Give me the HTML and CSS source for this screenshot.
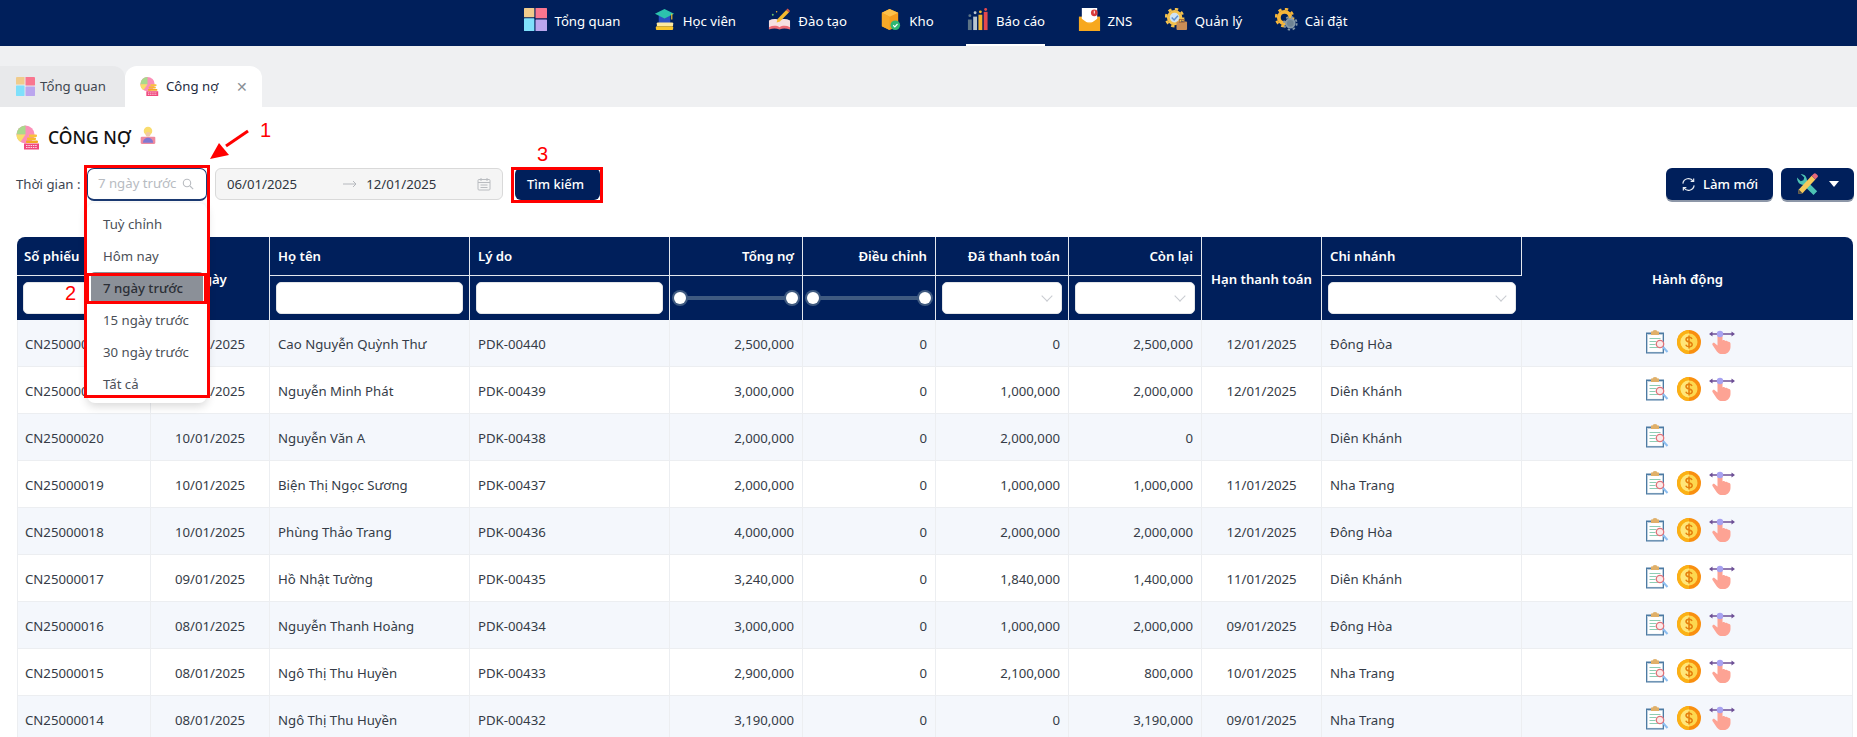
FILE: index.html
```html
<!DOCTYPE html>
<html lang="vi">
<head>
<meta charset="utf-8">
<title>Công nợ</title>
<link rel="stylesheet" href="styles.css">
</head>
<body>
<svg class="defs" aria-hidden="true">
  <symbol id="i-overview" viewBox="0 0 20 20">
    <rect width="9" height="8" rx=".5" fill="#f0cb8c"/><rect x="10" width="10" height="9" rx=".5" fill="#f9768f"/>
    <rect y="9" width="9" height="11" rx=".5" fill="#7fe0fb"/><rect x="10" y="10" width="10" height="10" rx=".5" fill="#bba6ee"/>
  </symbol>
  <symbol id="i-student" viewBox="0 0 24 24">
    <rect x="6" y="8" width="12" height="8" fill="#2a4fc0"/><rect x="4" y="15" width="17" height="4" rx="1" fill="#fde9a0"/>
    <rect x="3" y="19" width="18" height="4" rx="1" fill="#f7c52c"/>
    <polygon points="12,1 22,6 12,11 2,6" fill="#2cc2ad"/><rect x="19" y="6" width="1.2" height="6" fill="#f7c52c"/>
  </symbol>
  <symbol id="i-train" viewBox="0 0 24 24">
    <path d="M1 13c4-2 8-2 11 0 3-2 7-2 11 0v9c-4-2-8-2-11 0-3-2-7-2-11 0z" fill="#f6dfe0"/>
    <path d="M1 20c4-2 8-2 11 0 3-2 7-2 11 0v2.500c-4-1.500-8-1.500-11 0-3-1.500-7-1.500-11 0z" fill="#ec6a74"/>
    <path d="M9 15l1-3.500L19 2l3 2.500-9.500 9.500z" fill="#f5b92e"/><path d="M19 2l3 2.500 1-1.500-2.500-2.500z" fill="#e2574c"/>
    <circle cx="5" cy="7" r="1" fill="#6cc46a"/><circle cx="9" cy="4" r=".8" fill="#f5b92e"/>
  </symbol>
  <symbol id="i-box" viewBox="0 0 24 24">
    <polygon points="11,1 20,5 20,19 11,23 3,19 3,5" fill="#f59b1c"/><polygon points="3,5 11,1 20,5 11,9" fill="#fdc04a"/>
    <polygon points="3,5 11,9 11,23 3,19" fill="#f7a928"/>
    <circle cx="17" cy="18" r="5" fill="#2fb673"/><path d="M14.800 18l1.700 1.700 2.800-3" fill="none" stroke="#fff" stroke-width="1.200"/>
  </symbol>
  <symbol id="i-chart" viewBox="0 0 24 24">
    <rect x="2" y="12" width="4" height="11" fill="#5d7486"/><rect x="7.500" y="9" width="4" height="14" fill="#b9c6cf"/>
    <rect x="13" y="7" width="4" height="16" fill="#f3b52e"/><rect x="18.500" y="4" width="4" height="19" fill="#e5484d"/>
    <circle cx="4" cy="8" r="1.500" fill="#5d7486"/><circle cx="9.500" cy="5" r="1.500" fill="#b9c6cf"/><circle cx="15" cy="4" r="1.500" fill="#f3b52e"/><circle cx="20.500" cy="1.500" r="1.500" fill="#e5484d"/>
  </symbol>
  <symbol id="i-zns" viewBox="0 0 24 24">
    <rect x="1" y="9" width="22" height="15" fill="#f9b233"/><rect x="4" y="0" width="16" height="15" fill="#fff"/>
    <path d="M1 9l11 8 11-8v15H1z" fill="#f7a81e"/><circle cx="17" cy="5" r="3.500" fill="#d93a3a"/><rect x="16.500" y="2.800" width="1" height="3" fill="#fff"/>
  </symbol>
  <symbol id="i-manage" viewBox="0 0 24 24">
    <circle cx="10" cy="10" r="6.500" fill="#cfe3f5" stroke="#f3c14d" stroke-width="3"/>
    <circle cx="10" cy="10" r="9" fill="none" stroke="#f3c14d" stroke-width="2.500" stroke-dasharray="3.500 3.570"/>
    <path d="M7 10l2.500 2.500 4-4.500" fill="none" stroke="#5b8fd0" stroke-width="1.500"/>
    <rect x="12" y="14" width="11" height="9" rx="1" fill="#c98d56"/><rect x="15" y="12" width="5" height="3" fill="none" stroke="#a56f3f"/>
  </symbol>
  <symbol id="i-settings" viewBox="0 0 24 24">
    <circle cx="10" cy="10" r="6" fill="#00205b" stroke="#f6b63a" stroke-width="4"/>
    <circle cx="10" cy="10" r="9" fill="none" stroke="#f6b63a" stroke-width="2.500" stroke-dasharray="3.500 3.570"/>
    <circle cx="16" cy="16" r="4.500" fill="#6f8494" stroke="#8599a8" stroke-width="2"/>
    <circle cx="16" cy="16" r="6.700" fill="none" stroke="#8599a8" stroke-width="1.800" stroke-dasharray="2.500 2.760"/>
  </symbol>
  <symbol id="i-debt" viewBox="0 0 24 24">
    <circle cx="9.500" cy="9" r="9" fill="#fb8fb8"/><path d="M9.500 9V0A9 9 0 0 0 .500 9z" fill="#a9d98c"/>
    <path d="M9.500 9H.500a9 9 0 0 0 4 7.500z" fill="#f6df6a"/>
    <rect x="11" y="12" width="9" height="2.500" rx="1" fill="#f8b92f"/><rect x="13" y="9" width="8" height="2.500" rx="1" fill="#f9c23c"/><rect x="10" y="15" width="12" height="2.500" rx="1" fill="#f4a825"/>
    <rect x="8" y="18" width="15" height="6" fill="#f0487d"/>
    <path d="M10 20h11M10 22h11" stroke="#fff" stroke-width=".8" stroke-dasharray="1.500 .8"/>
  </symbol>
  <symbol id="i-lamp" viewBox="0 0 16 16">
    <circle cx="8" cy="4" r="3.800" fill="#f9dc6e"/><rect x="1.500" y="9" width="13" height="6.500" rx="1" fill="#ee8aa0"/>
    <circle cx="8" cy="7" r="2.200" fill="#f1c9a4"/><path d="M3.500 14.500c0-3 2.300-4.500 4.500-4.500s4.500 1.500 4.500 4.500z" fill="#7f78d2"/>
  </symbol>
  <symbol id="i-clip" viewBox="0 0 24 24">
    <rect x="1" y="2.500" width="18" height="21" fill="#4d7ba3"/><rect x="2.500" y="4.500" width="15" height="17.500" fill="#fff" stroke="#d9e4ec" stroke-width=".5"/>
    <path d="M6 1.500h1.500a2.500 1.500 0 0 1 5 0H14v3.500H6z" fill="#e0b069"/>
    <path d="M4.500 8.500h11M4.500 11.500h7M4.500 14.500h6M4.500 17.500h9" stroke="#8ecdb4" stroke-width="1"/>
    <circle cx="15" cy="14" r="3.700" fill="#fbeaea" stroke="#e2727a" stroke-width="1.300"/><path d="M18 17l4.500 5" stroke="#8bbdf0" stroke-width="2"/>
  </symbol>
  <symbol id="i-coin" viewBox="0 0 24 24">
    <circle cx="12" cy="12" r="12" fill="#f98f0f"/><path d="M12 0a12 12 0 0 0 0 24z" fill="#fbb115"/>
    <circle cx="12" cy="12" r="8.500" fill="#fdd84f"/><path d="M12 3.500a8.500 8.500 0 0 0 0 17z" fill="#ffe679"/>
    <path d="M15 9c-.5-1.300-1.700-1.800-3-1.800-1.700 0-3 .8-3 2.300 0 3.300 6.200 1.800 6.200 5 0 1.500-1.400 2.300-3.200 2.300-1.400 0-2.700-.6-3.200-2M12 5.500v13" fill="none" stroke="#e57f0c" stroke-width="1.500"/>
  </symbol>
  <symbol id="i-hand" viewBox="0 0 26 24">
    <path d="M8.500 5a2.500 2.500 0 0 1 5 0v5.500c1-.8 2.300-.5 2.800.5 1-.6 2.200-.2 2.600.8 1.200-.4 2.600.3 2.600 2v3c0 4-3 7.500-7.500 7.500-3.500 0-5.500-1.500-7-4L3.500 15c-.8-1.300.8-2.800 2-2l3 2.500z" fill="#fda394"/>
    <path d="M2 4h22" stroke="#6d4f96" stroke-width="1.500"/><path d="M0 4l3.500-2.500v5zM26 4l-3.500-2.500v5z" fill="#6d4f96"/>
    <circle cx="11" cy="4" r="3.200" fill="#a7a1f0"/>
  </symbol>
  <symbol id="i-tools" viewBox="0 0 24 24">
    <path d="M4 1l4 4-1 3-3 1-4-4c0 5 3 8 7 8l11 11 4-4L11 9C11 5 9 1 4 1z" fill="#4dc3b4"/>
    <path d="M2 18L16 3l4 4L6 22l-5 1z" fill="#f6ca5b"/><path d="M16 3l2-2a2 2 0 0 1 3 0l1 1a2 2 0 0 1 0 3l-2 2z" fill="#e8697a"/><path d="M1 23l1-5 4 4z" fill="#4a4a4a"/>
  </symbol>
</svg>

<header class="topnav">
  <nav class="topnav-list">
    <a class="nav-item"><svg class="nav-icon"><use href="#i-overview"/></svg>Tổng quan</a>
    <a class="nav-item"><svg class="nav-icon"><use href="#i-student"/></svg>Học viên</a>
    <a class="nav-item"><svg class="nav-icon"><use href="#i-train"/></svg>Đào tạo</a>
    <a class="nav-item"><svg class="nav-icon"><use href="#i-box"/></svg>Kho</a>
    <a class="nav-item is-active"><svg class="nav-icon"><use href="#i-chart"/></svg>Báo cáo</a>
    <a class="nav-item"><svg class="nav-icon"><use href="#i-zns"/></svg>ZNS</a>
    <a class="nav-item"><svg class="nav-icon"><use href="#i-manage"/></svg>Quản lý</a>
    <a class="nav-item"><svg class="nav-icon"><use href="#i-settings"/></svg>Cài đặt</a>
  </nav>
</header>

<div class="tabbar">
  <div class="tab"><svg class="tab-icon"><use href="#i-overview"/></svg>Tổng quan</div>
  <div class="tab is-active"><svg class="tab-icon"><use href="#i-debt"/></svg>Công nợ<span class="tab-close">✕</span></div>
</div>

<main class="content">
  <h1 class="page-title"><svg class="title-icon"><use href="#i-debt"/></svg>CÔNG NỢ<svg class="lamp-icon"><use href="#i-lamp"/></svg></h1>

  <div class="filters">
    <span class="filter-label">Thời gian :</span>
    <div class="select-wrap">
      <div class="select-box"><span>7 ngày trước</span>
        <svg class="search-icon" viewBox="0 0 12 12"><circle cx="5" cy="5" r="3.700"/><path d="M8 8l3.200 3.200"/></svg>
      </div>
      <ul class="dropdown">
        <li>Tuỳ chỉnh</li><li>Hôm nay</li><li class="is-selected">7 ngày trước</li>
        <li>15 ngày trước</li><li>30 ngày trước</li><li>Tất cả</li>
      </ul>
    </div>
    <div class="range-box">
      <span class="range-date">06/01/2025</span>
      <svg class="range-arrow" viewBox="0 0 14 8"><path d="M0 4h13M10 1l3 3-3 3"/></svg>
      <span class="range-date">12/01/2025</span>
      <svg class="cal-icon" viewBox="0 0 14 14"><rect x="1" y="2.500" width="12" height="10.500" rx="1"/><path d="M1 5.500h12M4 1v3M10 1v3M3.500 8h7M3.500 10.500h7"/></svg>
    </div>
    <button class="btn btn-search">Tìm kiếm</button>
    <div class="filter-actions">
      <button class="btn btn-refresh"><svg class="refresh-icon" viewBox="0 0 16 16"><path d="M2 7a6 6 0 0 1 11-2.500M14 9a6 6 0 0 1-11 2.500"/><path d="M13.500 1.500v3.200h-3.200M2.500 14.500v-3.200h3.200"/></svg>Làm mới</button>
      <button class="btn btn-tools"><svg class="tools-icon"><use href="#i-tools"/></svg><span class="caret"></span></button>
    </div>
  </div>

  <table class="grid">
    <colgroup>
      <col class="c-1"><col class="c-2"><col class="c-3"><col class="c-3"><col class="c-4"><col class="c-4"><col class="c-4"><col class="c-4"><col class="c-7"><col class="c-5"><col class="c-6">
    </colgroup>
    <thead>
      <tr class="head-1">
        <th class="left">Số phiếu</th><th rowspan="2" class="span">Ngày</th><th class="left">Họ tên</th><th class="left">Lý do</th>
        <th class="right">Tổng nợ</th><th class="right">Điều chỉnh</th><th class="right">Đã thanh toán</th><th class="right">Còn lại</th>
        <th rowspan="2" class="span">Hạn thanh toán</th><th class="left">Chi nhánh</th><th rowspan="2" class="span">Hành động</th>
      </tr>
      <tr class="head-2">
        <th><input class="filter-input"></th><th><input class="filter-input"></th><th><input class="filter-input"></th>
        <th><div class="slider"><i></i><i></i></div></th><th><div class="slider"><i></i><i></i></div></th>
        <th><div class="filter-select"><span class="chev"></span></div></th><th><div class="filter-select"><span class="chev"></span></div></th>
        <th><div class="filter-select"><span class="chev"></span></div></th>
      </tr>
    </thead>
    <tbody>
      <tr><td>CN25000022</td><td class="center">10/01/2025</td><td>Cao Nguyễn Quỳnh Thư</td><td>PDK-00440</td><td class="right">2,500,000</td><td class="right">0</td><td class="right">0</td><td class="right">2,500,000</td><td class="center">12/01/2025</td><td>Đông Hòa</td><td><div class="acts"><svg class="act"><use href="#i-clip"/></svg><svg class="act"><use href="#i-coin"/></svg><svg class="act act-hand"><use href="#i-hand"/></svg></div></td></tr>
      <tr><td>CN25000021</td><td class="center">10/01/2025</td><td>Nguyễn Minh Phát</td><td>PDK-00439</td><td class="right">3,000,000</td><td class="right">0</td><td class="right">1,000,000</td><td class="right">2,000,000</td><td class="center">12/01/2025</td><td>Diên Khánh</td><td><div class="acts"><svg class="act"><use href="#i-clip"/></svg><svg class="act"><use href="#i-coin"/></svg><svg class="act act-hand"><use href="#i-hand"/></svg></div></td></tr>
      <tr><td>CN25000020</td><td class="center">10/01/2025</td><td>Nguyễn Văn A</td><td>PDK-00438</td><td class="right">2,000,000</td><td class="right">0</td><td class="right">2,000,000</td><td class="right">0</td><td class="center"></td><td>Diên Khánh</td><td><div class="acts"><svg class="act"><use href="#i-clip"/></svg></div></td></tr>
      <tr><td>CN25000019</td><td class="center">10/01/2025</td><td>Biện Thị Ngọc Sương</td><td>PDK-00437</td><td class="right">2,000,000</td><td class="right">0</td><td class="right">1,000,000</td><td class="right">1,000,000</td><td class="center">11/01/2025</td><td>Nha Trang</td><td><div class="acts"><svg class="act"><use href="#i-clip"/></svg><svg class="act"><use href="#i-coin"/></svg><svg class="act act-hand"><use href="#i-hand"/></svg></div></td></tr>
      <tr><td>CN25000018</td><td class="center">10/01/2025</td><td>Phùng Thảo Trang</td><td>PDK-00436</td><td class="right">4,000,000</td><td class="right">0</td><td class="right">2,000,000</td><td class="right">2,000,000</td><td class="center">12/01/2025</td><td>Đông Hòa</td><td><div class="acts"><svg class="act"><use href="#i-clip"/></svg><svg class="act"><use href="#i-coin"/></svg><svg class="act act-hand"><use href="#i-hand"/></svg></div></td></tr>
      <tr><td>CN25000017</td><td class="center">09/01/2025</td><td>Hồ Nhật Tường</td><td>PDK-00435</td><td class="right">3,240,000</td><td class="right">0</td><td class="right">1,840,000</td><td class="right">1,400,000</td><td class="center">11/01/2025</td><td>Diên Khánh</td><td><div class="acts"><svg class="act"><use href="#i-clip"/></svg><svg class="act"><use href="#i-coin"/></svg><svg class="act act-hand"><use href="#i-hand"/></svg></div></td></tr>
      <tr><td>CN25000016</td><td class="center">08/01/2025</td><td>Nguyễn Thanh Hoàng</td><td>PDK-00434</td><td class="right">3,000,000</td><td class="right">0</td><td class="right">1,000,000</td><td class="right">2,000,000</td><td class="center">09/01/2025</td><td>Đông Hòa</td><td><div class="acts"><svg class="act"><use href="#i-clip"/></svg><svg class="act"><use href="#i-coin"/></svg><svg class="act act-hand"><use href="#i-hand"/></svg></div></td></tr>
      <tr><td>CN25000015</td><td class="center">08/01/2025</td><td>Ngô Thị Thu Huyền</td><td>PDK-00433</td><td class="right">2,900,000</td><td class="right">0</td><td class="right">2,100,000</td><td class="right">800,000</td><td class="center">10/01/2025</td><td>Nha Trang</td><td><div class="acts"><svg class="act"><use href="#i-clip"/></svg><svg class="act"><use href="#i-coin"/></svg><svg class="act act-hand"><use href="#i-hand"/></svg></div></td></tr>
      <tr><td>CN25000014</td><td class="center">08/01/2025</td><td>Ngô Thị Thu Huyền</td><td>PDK-00432</td><td class="right">3,190,000</td><td class="right">0</td><td class="right">0</td><td class="right">3,190,000</td><td class="center">09/01/2025</td><td>Nha Trang</td><td><div class="acts"><svg class="act"><use href="#i-clip"/></svg><svg class="act"><use href="#i-coin"/></svg><svg class="act act-hand"><use href="#i-hand"/></svg></div></td></tr>
    </tbody>
  </table>
</main>

<div class="note note-box-1"></div>
<div class="note note-box-2"></div>
<div class="note note-box-3"></div>
<span class="note note-num note-num-1">1</span>
<span class="note note-num note-num-2">2</span>
<span class="note note-num note-num-3">3</span>
<svg class="note note-arrow" viewBox="0 0 44 32"><path d="M40 2L18 17" stroke="#f00" stroke-width="3"/><polygon points="2,30 11,14 21,26" fill="#f00"/></svg>
</body>
</html>
```
FILE: styles.css
```css
* { box-sizing: border-box; }
html, body { margin: 0; height: 737px; overflow: hidden; }
body { position: relative; background: #fff; color: #333a45; font: 13.2px/1.4 "Noto Sans", "Open Sans", sans-serif; }
.defs { position: absolute; width: 0; height: 0; }

.topnav { height: 46px; background: #001f5b; }
.topnav-list { display: flex; justify-content: center; gap: 32.4px; height: 46px; padding-left: 15px; }
.nav-item { display: flex; align-items: center; gap: 7px; height: 46px; padding-bottom: 1px; color: #fff; font-size: 13.2px; border-bottom: 2px solid transparent; }
.nav-item.is-active { border-bottom-color: #fff; }
.nav-icon { width: 23px; height: 23px; margin-bottom: 4px; flex: none; }

.tabbar { display: flex; align-items: flex-end; height: 61px; background: #eff0f2; }
.tab { display: flex; align-items: center; height: 41px; width: 125px; padding-left: 16px; gap: 5px; background: #e8e9eb; border-radius: 0 12px 0 0; color: #3e4650; }
.tab.is-active { width: 137px; padding-left: 15px; gap: 7px; background: #fff; border-radius: 12px 12px 0 0; color: #1c2a3f; }
.tab-icon { width: 19px; height: 19px; flex: none; }
.tab-close { margin-left: 11px; color: #8a8f96; font-size: 14px; }

.content { padding: 16px 0 0 16px; }
.page-title { display: flex; align-items: center; gap: 8px; height: 27px; margin: 0; padding-top: 1px; font-size: 17.5px; font-weight: 500; color: #111; }
.title-icon { width: 24px; height: 27px; flex: none; }
.lamp-icon { width: 18px; height: 19px; flex: none; margin-top: -3px; }

.filters { display: flex; align-items: center; height: 32px; margin: 18px 3px 37px 0; }
.filter-label { width: 71px; color: #3c4450; }
.select-wrap { position: relative; width: 120px; height: 33px; }
.select-box { display: flex; align-items: center; justify-content: space-between; height: 33px; padding: 0 12px 0 10px; background: #fff; border: 1px solid #1b3a73; border-bottom-width: 2px; border-radius: 7px; color: #b7bbc1; }
.search-icon { width: 12px; height: 12px; fill: none; stroke: #b9bcc1; stroke-width: 1.100; flex: none; }
.dropdown { position: absolute; top: 35px; left: 0; z-index: 3; width: 120px; height: 200px; margin: 0; padding: 5px 4px; list-style: none; background: #fff; border-radius: 8px; box-shadow: 0 3px 10px rgba(0,0,0,.16); }
.dropdown li { height: 32px; padding: 0 12px; line-height: 32px; color: #4b4f57; white-space: nowrap; }
.dropdown .is-selected { background: #8b9098; border-radius: 4px; color: #2b2f36; font-weight: 500; }

.range-box { display: flex; align-items: center; width: 288px; height: 32px; margin-left: 8px; padding: 0 11px; background: #f5f5f5; border: 1px solid #d9d9d9; border-radius: 6px; color: #2f3640; }
.range-arrow { width: 14px; height: 8px; margin: 0 9px 0 46px; fill: none; stroke: #b5b8bd; flex: none; }
.cal-icon { width: 14px; height: 14px; margin-left: auto; fill: none; stroke: #b9bcc0; flex: none; }

.btn { display: flex; align-items: center; justify-content: center; height: 32px; padding: 0; border: 0; border-radius: 6px; background: #001f5b; color: #fff; font: inherit; box-shadow: 0 2px 0 #8d97a8; }
.btn-search { width: 85px; margin-left: 12px; padding-right: 4px; font-weight: 500; font-size: 13px; box-shadow: none; }
.filter-actions { display: flex; gap: 8px; margin-left: auto; }
.btn-refresh { width: 107px; gap: 7px; font-weight: 500; }
.refresh-icon { width: 15px; height: 15px; fill: none; stroke: #e8ecf2; stroke-width: 1.300; flex: none; }
.btn-tools { width: 73px; gap: 10px; }
.tools-icon { width: 22px; height: 22px; flex: none; }
.caret { width: 0; height: 0; border: 5.500px solid transparent; border-top: 6px solid #fff; border-bottom: 0; }

.grid { width: 1836px; margin-left: 1px; table-layout: fixed; border-collapse: separate; border-spacing: 0; }
.c-1 { width: 134px; } .c-2 { width: 119px; } .c-3 { width: 200px; } .c-4 { width: 133px; } .c-7 { width: 120px; } .c-5 { width: 200px; } .c-6 { width: 331px; }
.grid th { padding: 0 8px; background: #001f5b; color: #fff; font-weight: 600; text-align: center; border-right: 1px solid #e4e8ee; }
.grid th:last-child { border-right: 0; }
.grid th.span { padding-top: 2px; }
.head-1 th:first-child { border-top-left-radius: 8px; padding-left: 7px; }
.head-1 th:last-child { border-top-right-radius: 8px; }
.head-1 { height: 39px; }
.head-1 th.left, .head-1 th.right { border-bottom: 1px solid #e4e8ee; }
.head-1 th.left { text-align: left; }
.head-1 th.right { text-align: right; }
.head-2 { height: 44px; }
.head-2 th { padding: 0 6px; }
.filter-input, .filter-select { display: block; width: 100%; height: 32px; margin: 0; padding: 0 8px; background: #fff; border: 1px solid #e3e5e8; border-radius: 5px; }
.filter-select { position: relative; }
.chev { position: absolute; top: 9px; right: 10px; width: 8px; height: 8px; border-right: 1px solid #c8cbd0; border-bottom: 1px solid #c8cbd0; transform: rotate(45deg); }
.slider { position: relative; height: 4px; margin: 0 4px; background: #3f5a80; }
.slider i { position: absolute; top: -4px; left: -6px; width: 12px; height: 12px; background: #fff; border-radius: 50%; box-shadow: 0 0 0 2px #3f5a80; }
.slider i:last-child { left: auto; right: -6px; }

.grid td { height: 47px; padding: 2px 8px 0; border-right: 1px solid #eceef1; border-bottom: 1px solid #eceef1; white-space: nowrap; color: #353c47; }
.grid td:first-child { padding-left: 7px; border-left: 1px solid #eceef1; }
.grid tbody tr:nth-child(odd) td { background: #f4f7fc; }
.grid td.center { text-align: center; }
.grid td.right { text-align: right; }
.acts { display: flex; gap: 8px; width: 85px; height: 24px; margin: -5px auto 0; }
.act { width: 24px; height: 24px; flex: none; }
.act-hand { width: 26px; }

.note { position: absolute; z-index: 5; }
.note-box-1, .note-box-2, .note-box-3 { border: 3px solid #f00; pointer-events: none; }
.note-box-1 { left: 84px; top: 165px; width: 126px; height: 233px; }
.note-box-2 { left: 86px; top: 273px; width: 121px; height: 31px; }
.note-box-3 { left: 511px; top: 167px; width: 92px; height: 36px; }
.note-num { color: #f00; font: 20px/1 "Liberation Sans", Arial, sans-serif; }
.note-num-1 { left: 260px; top: 120px; }
.note-num-2 { left: 65px; top: 283px; }
.note-num-3 { left: 537px; top: 144px; }
.note-arrow { left: 208px; top: 129px; width: 44px; height: 32px; }
```
